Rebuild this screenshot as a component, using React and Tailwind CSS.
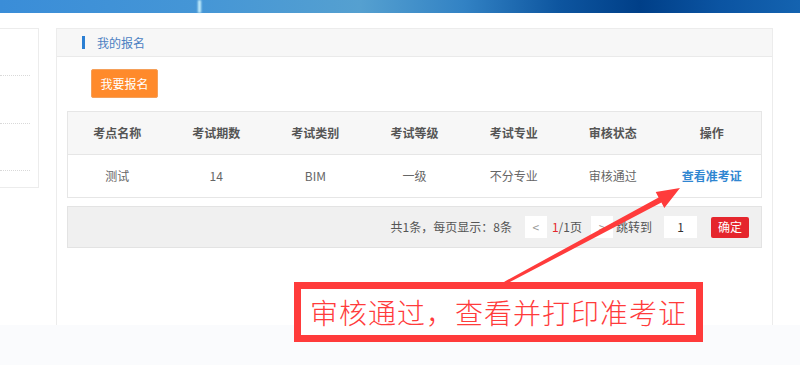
import React from 'react'

const FONT = { fontFamily: '"Noto Sans CJK SC", "Noto Sans", sans-serif' }

const COLS = ['考点名称', '考试期数', '考试类别', '考试等级', '考试专业', '审核状态', '操作']
const ROW = ['测试', '14', 'BIM', '一级', '不分专业', '审核通过']

function Sidebar() {
  return (
    <div className="mt-[15px] w-[39px] h-[160px] border-t border-r border-b border-[#ececec] bg-white">
      <div className="h-[47px] mr-[8px] border-b border-dotted border-[#d9d9d9]" />
      <div className="h-[48px] mr-[8px] border-b border-dotted border-[#d9d9d9]" />
      <div className="h-[47px] mr-[8px] border-b border-dotted border-[#d9d9d9]" />
    </div>
  )
}

function Pager() {
  return (
    <div className="mx-[10px] mt-[8px] h-[42px] bg-[#f0f0f0] border border-[#e3e3e3] flex items-center justify-end pr-[12px] text-[12px] text-[#555]">
      <span>共1条，每页显示：8条</span>
      <span className="ml-[13px] w-[22px] h-[22px] bg-white flex items-center justify-center text-[#999]">&lt;</span>
      <span className="ml-[5px]"><span className="text-[#e5262d]">1</span>/1页</span>
      <span className="ml-[9px] w-[22px] h-[22px] bg-white flex items-center justify-center text-[#999]">&gt;</span>
      <span className="ml-[3px]">跳转到</span>
      <span className="ml-[12px] w-[33px] h-[22px] bg-white flex items-center justify-center text-[#333]">1</span>
      <span className="ml-[14px] w-[38px] h-[21px] bg-[#e5262d] rounded-[2px] text-white flex items-center justify-center">确定</span>
    </div>
  )
}

function MainPanel() {
  return (
    <div className="ml-[17px] mt-[15px] w-[717px] h-[297px] border-t border-l border-r border-[#ececec] bg-white">
      <div className="h-[28px] bg-[#f7f7f7] border-b border-[#eaeaea] flex items-center pl-[25px]">
        <span className="w-[3px] h-[13px] bg-[#2b7fd3]" />
        <span className="ml-[12px] text-[12px] text-[#4b80c2]">我的报名</span>
      </div>
      <div className="pt-[12px] pl-[34px]">
        <button className="w-[67px] h-[29px] bg-[#ff8a2b] rounded-[2px] text-white text-[12px] border border-[#f5a05a]">我要报名</button>
      </div>
      <div className="mx-[10px] mt-[13px]">
        <table className="w-full table-fixed border-collapse text-[12px]">
          <thead>
            <tr className="h-[43px] bg-[#f7f7f7]">
              {COLS.map(c => (
                <th key={c} className="border-y border-[#e6e6e6] first:border-l last:border-r font-bold text-[#555]">{c}</th>
              ))}
            </tr>
          </thead>
          <tbody>
            <tr className="h-[43px]">
              {ROW.map(c => (
                <td key={c} className="border-b border-[#e6e6e6] first:border-l text-center text-[#666]">{c}</td>
              ))}
              <td className="border-b border-r border-[#e6e6e6] text-center font-bold text-[#2f86d1]">查看准考证</td>
            </tr>
          </tbody>
        </table>
      </div>
      <Pager />
    </div>
  )
}

function Arrow() {
  return (
    <svg className="absolute left-0 top-0 pointer-events-none" width="800" height="365">
      <polygon
        points="504.3,281.7 658.6,197.4 655.7,192.1 680,188 664.3,207.9 661.4,202.6 505.7,284.3"
        fill="#ff3b3b"
      />
    </svg>
  )
}

export default function App() {
  return (
    <div className="relative w-[800px] h-[365px] overflow-hidden bg-white" style={FONT}>
      <div className="relative h-[13px] bg-[linear-gradient(90deg,#3a8dd8_0%,#4596d6_25%,#55a0d0_45%,#3282c4_58%,#0d559f_70%,#003f88_80%,#0b54a2_90%,#1463b0_100%)]">
        <div className="absolute left-[198px] top-0 w-[3px] h-[13px] bg-[#cdf4ff] blur-[1px]" />
      </div>
      <div className="flex">
        <Sidebar />
        <MainPanel />
      </div>
      {/* faint wash over the bottom edge of the capture */}
      <div className="h-[40px] bg-[#fafbfd]" />
      <Arrow />
      <div className="absolute left-[294px] top-[282px] w-[409px] h-[60px] border-[7px] border-[#ff3b3b] bg-white flex items-center justify-center">
        <span className="text-[28px] leading-none tracking-[1px] font-light text-[#ff3b3b]">审核通过，查看并打印准考证</span>
      </div>
    </div>
  )
}
